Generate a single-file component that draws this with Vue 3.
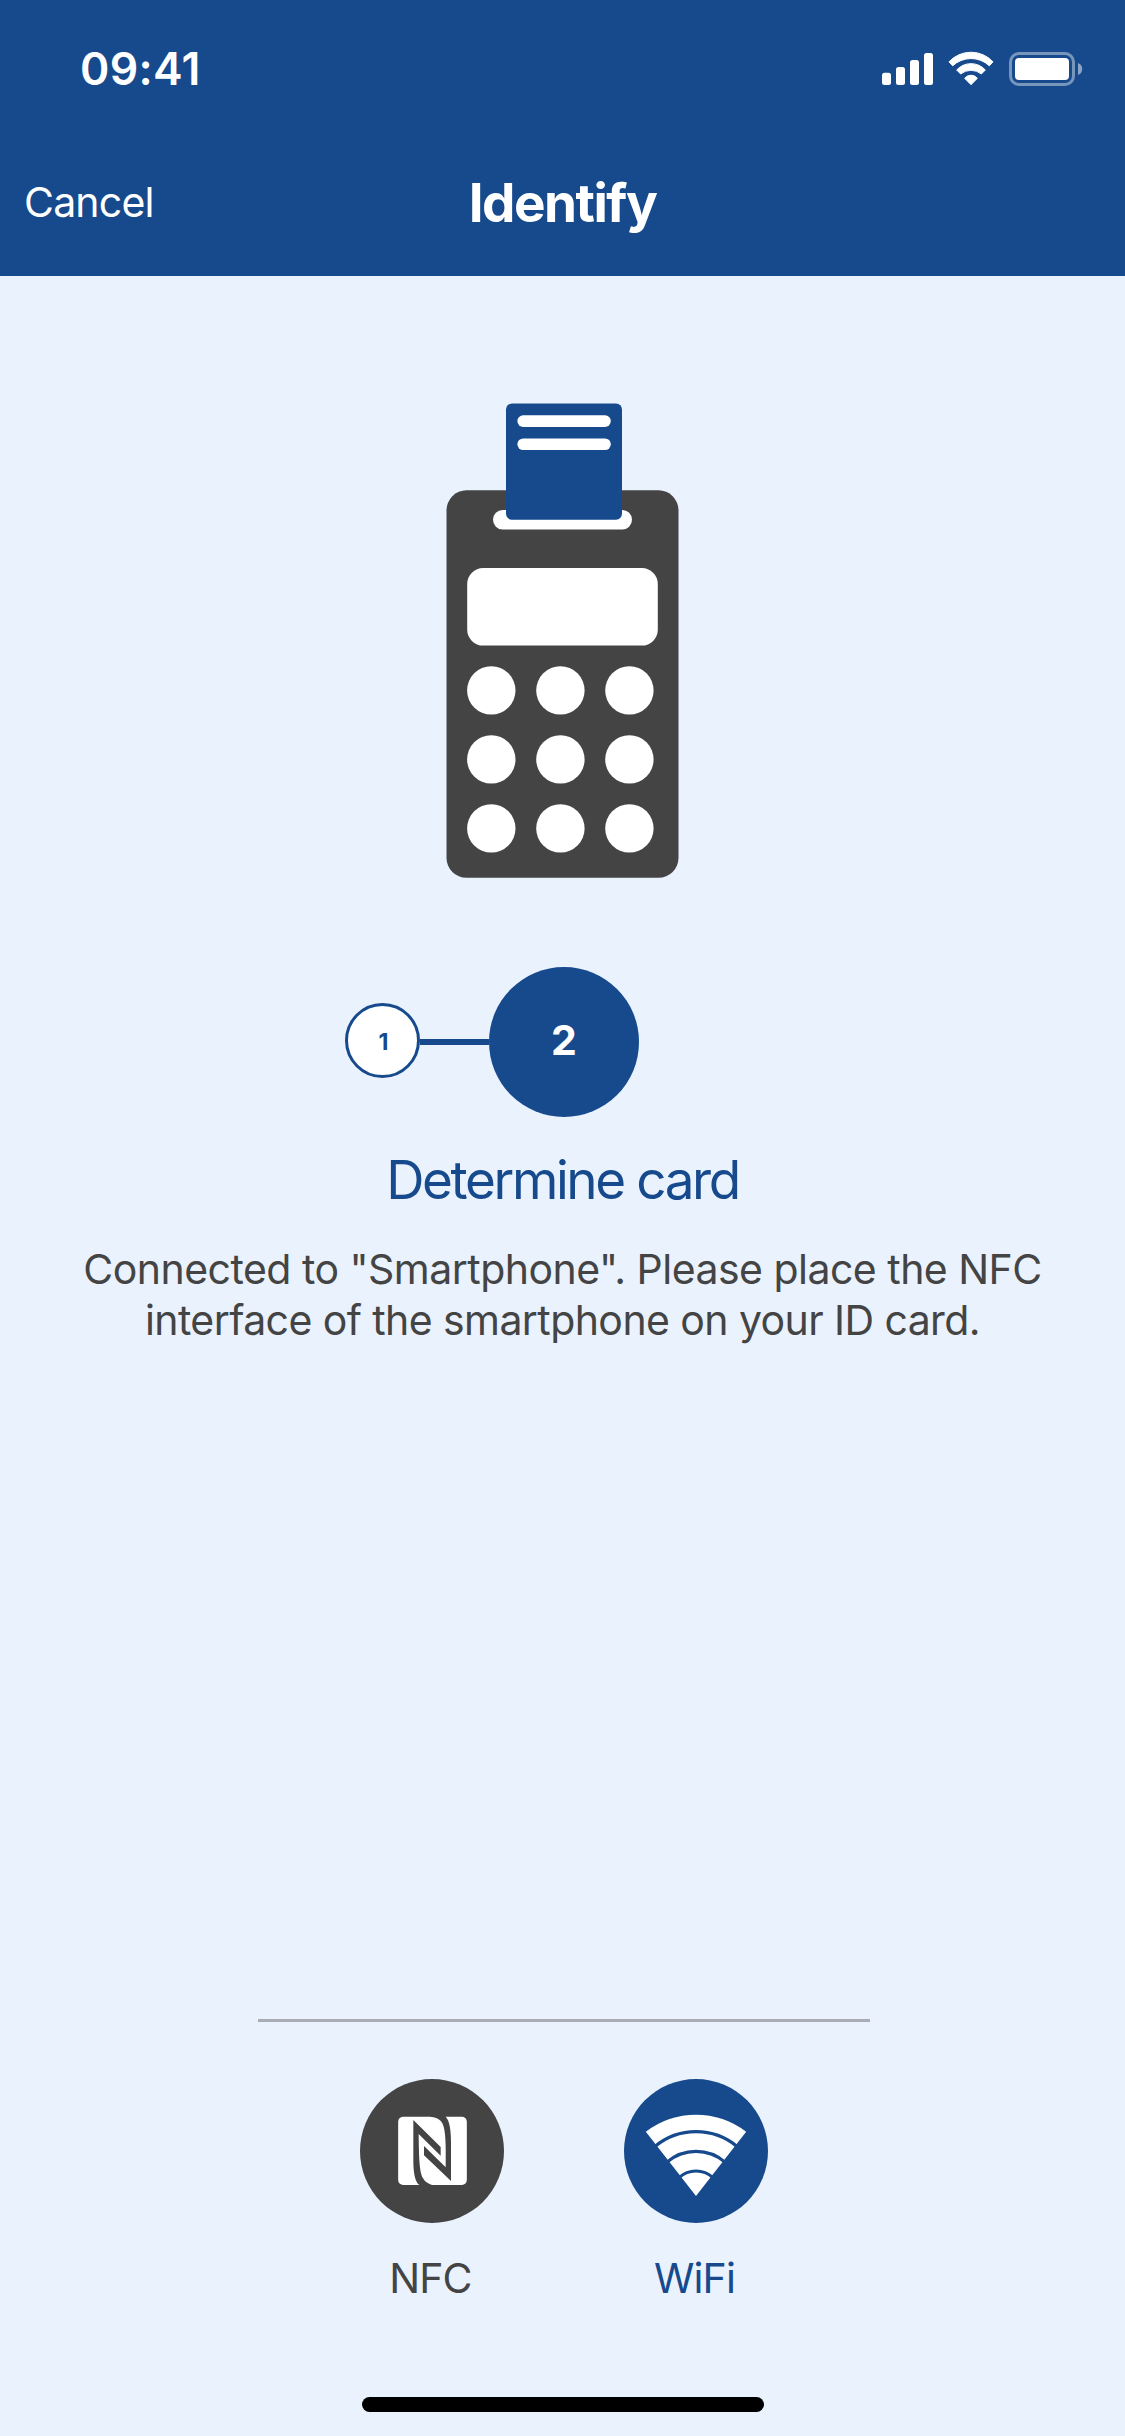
<script setup>
const keyColumns = [491.3, 560.4, 629.4]
const keyRows = [690.4, 759.4, 828.4]
const lines = [
  'Connected to "Smartphone". Please place the NFC',
  'interface of the smartphone on your ID card.'
]
</script>

<template>
  <div class="screen">
    <header class="header">
      <div class="status">
        <span class="time">09:41</span>
        <svg class="status-icons" viewBox="0 0 285 100" width="285" height="100">
          <g fill="#fff">
            <rect x="42" y="52.7" width="9" height="12.3" rx="2.5" />
            <rect x="56" y="47" width="9" height="18" rx="2.5" />
            <rect x="70" y="40" width="9" height="25" rx="2.5" />
            <rect x="84" y="33" width="9" height="32" rx="2.5" />
            <rect x="175" y="38" width="54" height="22" rx="4" />
          </g>
          <g transform="scale(.33333)" fill="#fff" stroke="#fff" stroke-width="3" stroke-linejoin="round">
            <path d="M327 125A90 90 0 0 1 459 125L448 137A80 80 0 0 0 338 137Z" transform="translate(0 .5)" />
            <path d="M350 150A58 58 0 0 1 436 150L424 162A49 49 0 0 0 362 162Z" />
            <path d="M374 175A24 24 0 0 1 412 175L393 194Z" />
          </g>
          <rect x="170.5" y="33.5" width="63" height="31" rx="8.5" fill="none" stroke="#fff" stroke-opacity=".42" stroke-width="3" />
          <path d="M238 43A6.4 6.4 0 0 1 238 55Z" fill="#fff" fill-opacity=".5" />
        </svg>
      </div>
      <div class="nav">
        <span class="cancel">Cancel</span>
        <h1 class="title">Identify</h1>
        <span></span>
      </div>
    </header>

    <main class="content">
      <svg class="reader" viewBox="446 403 233 476" width="233" height="476">
        <rect x="446.5" y="490.3" width="232" height="387.5" rx="20" fill="#444" />
        <rect x="493" y="510" width="139" height="19.5" rx="9.7" fill="#fff" />
        <rect x="506" y="403.4" width="116" height="116.4" rx="6" fill="#164a8c" />
        <rect x="517.4" y="415.2" width="93.4" height="11.7" rx="5.8" fill="#fff" />
        <rect x="517.4" y="438.4" width="93.4" height="11.7" rx="5.8" fill="#fff" />
        <rect x="467.2" y="568" width="190.6" height="77.6" rx="16" fill="#fff" />
        <template v-for="y in keyRows" :key="y">
          <circle v-for="x in keyColumns" :key="x" :cx="x" :cy="y" r="24.2" fill="#fff" />
        </template>
      </svg>

      <div class="steps">
        <div class="step done"><span>1</span></div>
        <div class="link"></div>
        <div class="step active"><span>2</span></div>
      </div>

      <h2 class="heading">Determine card</h2>
      <p class="text">
        <span v-for="(line, i) in lines" :key="i" :class="'line line-' + i">{{ line }}</span>
      </p>
    </main>

    <footer class="footer">
      <div class="divider"></div>
      <div class="modes">
        <div class="mode nfc">
          <svg viewBox="30 27 432 432" width="144" height="144">
            <circle cx="246" cy="243" r="216" fill="#444" />
            <rect x="144.500" y="140.500" width="206" height="204.500" rx="15" fill="#fff" />
            <g fill="#444">
              <path d="M190 150L272 231V257L206 192C207 285 210 308 219 325Q228 341 248 345.500V347H208V345C193 335 190 300 190 270Z" />
              <path d="M303 333L222 256V228L287 292C288 220 287 180 277 160Q268 142 242 140V138H287V140C300 153 303 185 303 220Z" />
            </g>
          </svg>
          <span>NFC</span>
        </div>
        <div class="mode wifi">
          <svg viewBox="42 27 432 432" width="144" height="144">
            <circle cx="258" cy="243" r="216" fill="#164a8c" />
            <path d="M258 378L107.500 185.500A245.500 245.500 0 0 1 408.500 185.500Z" fill="#fff" />
            <g fill="none" stroke="#164a8c" stroke-width="9.500">
              <path d="M134 230A193 193 0 0 1 382 230" />
              <path d="M170 277A134 134 0 0 1 346 277" />
              <path d="M207 323A75 75 0 0 1 309 323" />
            </g>
          </svg>
          <span>WiFi</span>
        </div>
      </div>
      <div class="home"></div>
    </footer>
  </div>
</template>

<style>
body {
  margin: 0;
}
</style>

<style scoped>
.screen {
  display: flex;
  flex-direction: column;
  width: 1125px;
  height: 2436px;
  overflow: hidden;
  background: #eaf2fe;
  color: #444;
  font-family: Inter, "Liberation Sans", sans-serif;
  font-size: 41px;
}
svg {
  display: block;
}
.header {
  height: 276px;
  background: #164a8c;
  color: #fff;
}
.status {
  display: flex;
  justify-content: space-between;
  height: 132px;
}
.time {
  padding: 42px 0 0 80px;
  font-size: 44.5px;
  line-height: 54px;
  font-weight: 600;
  letter-spacing: 0.3px;
}
.status-icons {
  margin-top: 20px;
}
.nav {
  display: grid;
  grid-template-columns: 1fr auto 1fr;
  height: 144px;
  line-height: 142px;
}
.cancel {
  padding-left: 24px;
  line-height: 140px;
  font-weight: 400;
  letter-spacing: -0.8px;
}
.title {
  margin: 0;
  font-size: 53px;
  font-weight: 700;
  letter-spacing: -1.5px;
}
.content {
  display: flex;
  flex: 1;
  flex-direction: column;
  align-items: center;
}
.reader {
  margin-top: 127px;
}
.steps {
  display: flex;
  align-items: center;
  width: 435px;
  height: 150px;
  margin-top: 88px;
}
.step {
  display: flex;
  box-sizing: border-box;
  align-items: center;
  justify-content: center;
  border-radius: 50%;
  font-weight: 700;
}
.done {
  width: 75px;
  height: 75px;
  margin-bottom: 3px;
  padding: 2px 0 0 2px;
  border: 3px solid #164a8c;
  background: #fff;
  color: #164a8c;
  font-size: 23px;
}
.active {
  width: 150px;
  height: 150px;
  padding-bottom: 4px;
  background: #164a8c;
  color: #fff;
}
.link {
  width: 69px;
  height: 6px;
  background: #164a8c;
}
.heading {
  margin: 32px 0 0;
  color: #164a8c;
  font-size: 53px;
  line-height: 62px;
  font-weight: 400;
  letter-spacing: -2.4px;
}
.text {
  margin: 33px 0 0;
  line-height: 51px;
  text-align: center;
}
.line {
  display: block;
  letter-spacing: -0.52px;
  white-space: nowrap;
}
.line-1 {
  letter-spacing: -0.58px;
}
.footer {
  display: flex;
  flex-direction: column;
  align-items: center;
  height: 417px;
}
.divider {
  width: 612px;
  height: 3px;
  margin-left: 3px;
  background: #a9adb3;
}
.modes {
  display: flex;
  gap: 120px;
  margin: 57px 0 0 3px;
}
.mode {
  display: flex;
  flex-direction: column;
  align-items: center;
  width: 144px;
}
.mode span {
  margin: 29px 3px 0 0;
  line-height: 52px;
  font-weight: 400;
  letter-spacing: -0.9px;
}
.wifi {
  color: #164a8c;
}
.home {
  width: 402px;
  height: 15px;
  margin: 93px 0 0 1px;
  border-radius: 8px;
  background: #000;
}
</style>
